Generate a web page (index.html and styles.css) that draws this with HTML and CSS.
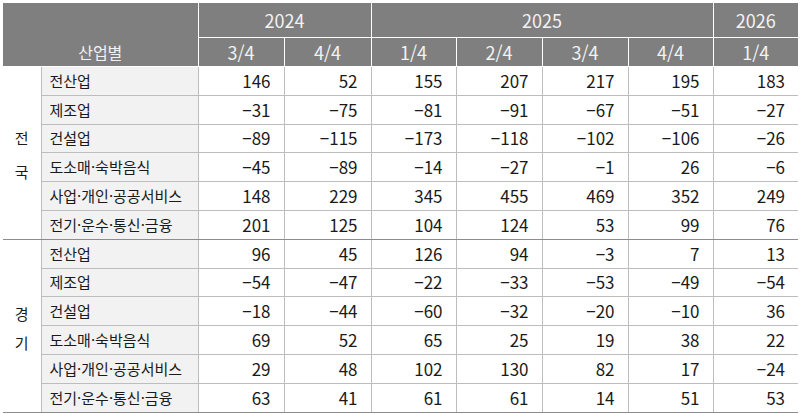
FILE: index.html
```html
<!DOCTYPE html>
<html lang="ko">
<head>
<meta charset="utf-8">
<link rel="stylesheet" href="styles.css">
</head>
<body>
<table class="tbl">
  <colgroup>
    <col class="c-region"><col class="c-label">
    <col class="c-d86"><col class="c-d87"><col class="c-d85"><col class="c-d86"><col class="c-d86"><col class="c-d85"><col class="c-d85">
  </colgroup>
  <thead>
    <tr class="h1">
      <th class="hcat" colspan="2" rowspan="2">산업별</th>
      <th colspan="2">2024</th>
      <th colspan="4">2025</th>
      <th>2026</th>
    </tr>
    <tr class="h2">
      <th>3/4</th><th>4/4</th><th>1/4</th><th>2/4</th><th>3/4</th><th>4/4</th><th>1/4</th>
    </tr>
  </thead>
  <tbody class="grp">
    <tr><td class="region" rowspan="6"><span class="r1">전</span><span class="r2">국</span></td><td class="lbl">전산업</td><td>146</td><td>52</td><td>155</td><td>207</td><td>217</td><td>195</td><td>183</td></tr>
    <tr><td class="lbl">제조업</td><td>−31</td><td>−75</td><td>−81</td><td>−91</td><td>−67</td><td>−51</td><td>−27</td></tr>
    <tr><td class="lbl">건설업</td><td>−89</td><td>−115</td><td>−173</td><td>−118</td><td>−102</td><td>−106</td><td>−26</td></tr>
    <tr><td class="lbl">도소매·숙박음식</td><td>−45</td><td>−89</td><td>−14</td><td>−27</td><td>−1</td><td>26</td><td>−6</td></tr>
    <tr><td class="lbl">사업·개인·공공서비스</td><td>148</td><td>229</td><td>345</td><td>455</td><td>469</td><td>352</td><td>249</td></tr>
    <tr><td class="lbl">전기·운수·통신·금융</td><td>201</td><td>125</td><td>104</td><td>124</td><td>53</td><td>99</td><td>76</td></tr>
  </tbody>
  <tbody class="grp">
    <tr><td class="region" rowspan="6"><span class="r1 g2">경</span><span class="r2">기</span></td><td class="lbl">전산업</td><td>96</td><td>45</td><td>126</td><td>94</td><td>−3</td><td>7</td><td>13</td></tr>
    <tr><td class="lbl">제조업</td><td>−54</td><td>−47</td><td>−22</td><td>−33</td><td>−53</td><td>−49</td><td>−54</td></tr>
    <tr><td class="lbl">건설업</td><td>−18</td><td>−44</td><td>−60</td><td>−32</td><td>−20</td><td>−10</td><td>36</td></tr>
    <tr><td class="lbl">도소매·숙박음식</td><td>69</td><td>52</td><td>65</td><td>25</td><td>19</td><td>38</td><td>22</td></tr>
    <tr><td class="lbl">사업·개인·공공서비스</td><td>29</td><td>48</td><td>102</td><td>130</td><td>82</td><td>17</td><td>−24</td></tr>
    <tr><td class="lbl">전기·운수·통신·금융</td><td>63</td><td>41</td><td>61</td><td>61</td><td>14</td><td>51</td><td>53</td></tr>
  </tbody>
</table>
</body>
</html>
```
FILE: styles.css
```css
html, body {
  margin: 0;
  padding: 0;
  background: #ffffff;
}
body {
  padding: 3px 0 0 3px;
  font-family: "Noto Sans CJK KR", "Noto Sans", sans-serif;
  color: #1a1a1a;
}
.tbl {
  border-collapse: collapse;
  table-layout: fixed;
  width: 795px;
  font-size: 17px;
}
.c-region { width: 38px; }
.c-label { width: 157px; }
.c-d86 { width: 86px; }
.c-d87 { width: 87px; }
.c-d85 { width: 85px; }

thead th {
  background: #7f7f7f;
  color: #f2f2f2;
  font-weight: normal;
  font-size: 18px;
  text-align: center;
  padding: 0;
  border: 1px solid #ffffff;
  border-top: none;
  line-height: 22px;
}
thead tr.h1 th { height: 34px; }
thead tr.h2 th { height: 28px; }
thead th.hcat {
  vertical-align: bottom;
  padding-bottom: 3px;
  border-left: none;
  font-size: 16px;
}
thead tr.h1 th:last-child,
thead tr.h2 th:last-child { border-right: none; }

tbody td {
  height: 27.8px;
  padding: 0 13px 0 0;
  text-align: right;
  border: 1px solid #bdbdbd;
  line-height: 20px;
}
tbody tr:last-child td { border-bottom: 1px solid #8c8c8c; }
tbody.grp + tbody.grp tr:first-child td { border-top: 1px solid #8c8c8c; }
tbody td:last-child { border-right: none; }
tbody td.lbl {
  background: #f2f2f2;
  text-align: left;
  padding: 0 0 0 8px;
  font-size: 15px;
  border-right: 1px solid #bdbdbd;
}
tbody td.region {
  background: #ffffff;
  border-left: none;
  padding: 5px 0 0 0;
  text-align: center;
  font-size: 15px;
  border-top: 1px solid #8c8c8c;
  border-bottom: 1px solid #8c8c8c;
}
.region span { display: block; }
.region .r1 { margin-bottom: 14px; }
.region .r1.g2 { margin-bottom: 9px; }
```
